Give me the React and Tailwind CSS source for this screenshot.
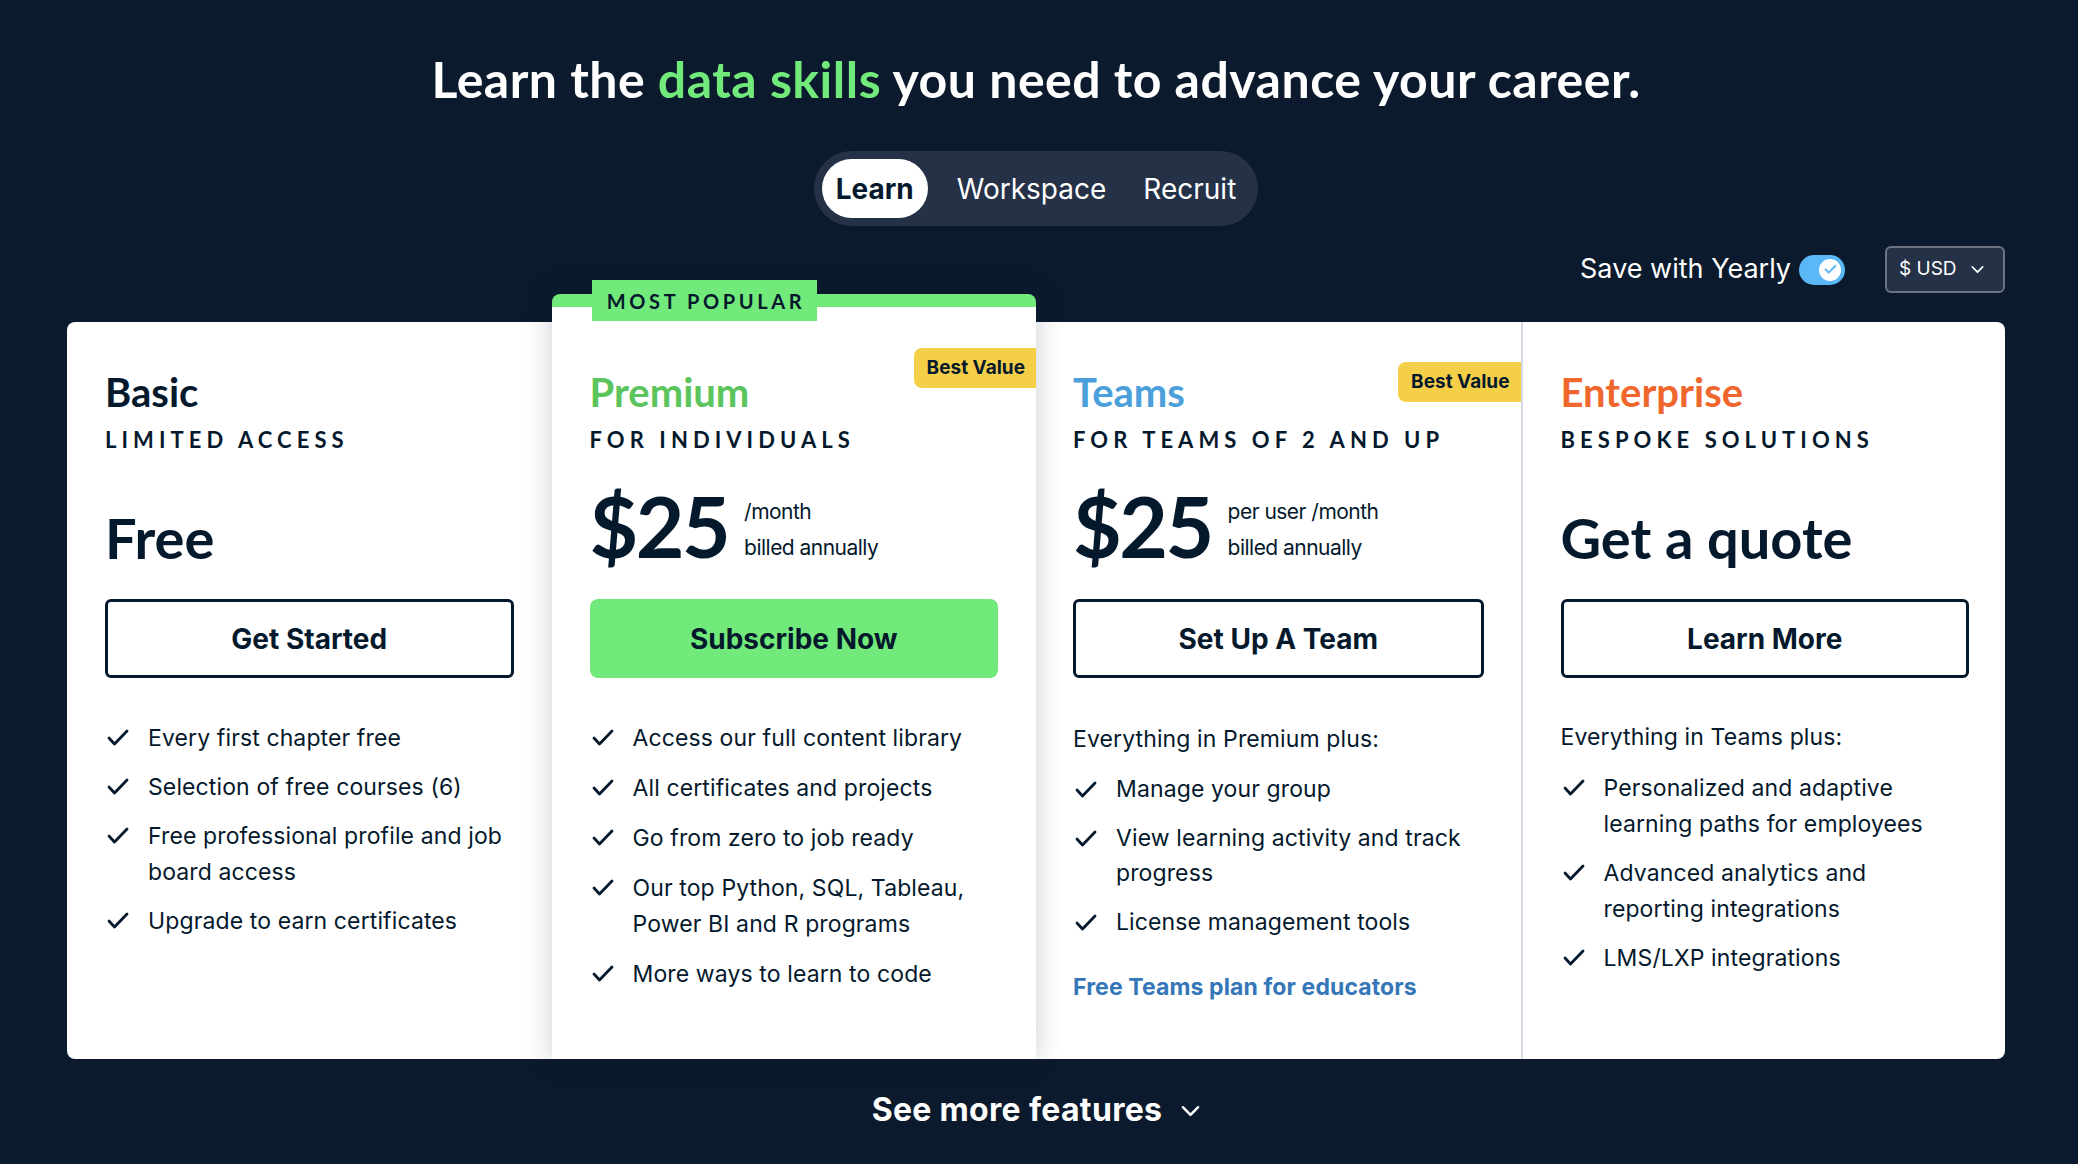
import React from 'react';
import { Check } from 'lucide-react';

// Lato for the big headings, Inter for body / buttons (closer widths to the original face)
const INTER = "font-[Inter,'Liberation_Sans',sans-serif]";

function CheckMark() {
  return (
    <svg viewBox="0 0 22 17" className="w-[22px] h-[17px] mt-[9px] ml-[2px] shrink-0 text-[#05192d]" fill="none" stroke="currentColor" strokeWidth="2.8" strokeLinecap="round" strokeLinejoin="round">
      <path d="M2 9 7.5 15 20 2" />
    </svg>
  );
}

function Chevron({ className }) {
  return (
    <svg viewBox="0 0 20 12" className={className} fill="none" stroke="currentColor" strokeWidth="2.6" strokeLinecap="round" strokeLinejoin="round">
      <path d="M2 2 10 10 18 2" />
    </svg>
  );
}

function Feature({ children }) {
  return (
    <li className="flex gap-[19px]">
      <CheckMark />
      <span className="whitespace-nowrap">{children}</span>
    </li>
  );
}

function BestValue({ top }) {
  return (
    <div className={`absolute right-0 ${top} h-[40px] pl-[13px] pr-[11px] flex items-center bg-[#f5cf48] rounded-l-lg text-[19px] font-bold text-[#05192d] ${INTER}`}>
      Best Value
    </div>
  );
}

function Heading({ title, color, sub }) {
  return (
    <>
      <h2 className={`text-[40px] leading-[48px] font-bold ${color}`}>{title}</h2>
      <p className="mt-[10px] text-[22px] leading-[28px] font-bold tracking-[0.23em] text-[#05192d]">{sub}</p>
    </>
  );
}

function Price({ extra }) {
  return (
    <div className="mt-[30px] h-[84px] flex items-start gap-[16px] text-[#05192d]">
      <span className="text-[84px] leading-[84px] font-bold tracking-[-0.03em]">$25</span>
      <div className={`pt-[10px] text-[21px] leading-[36px] tracking-[-0.025em] ${INTER}`}>
        <div>{extra}</div>
        <div>billed annually</div>
      </div>
    </div>
  );
}

function BigText({ children }) {
  return (
    <div className="mt-[30px] h-[84px]">
      <div className="pt-[26px] text-[56px] leading-[56px] font-bold text-[#05192d]">{children}</div>
    </div>
  );
}

function OutlineButton({ children }) {
  return (
    <button className={`mt-[31px] w-full h-[79px] border-[3px] border-[#05192d] rounded-md bg-white text-[28px] font-bold text-[#05192d] ${INTER}`}>
      {children}
    </button>
  );
}

export default function App() {
  return (
    <div className="min-h-screen w-full bg-[#0b1a2c] font-[Lato,'Liberation_Sans',sans-serif]">
      <div className="w-[2072px] flex flex-col items-center pb-[30px]">
        <h1 className="pt-[51px] text-[50px] leading-[56px] font-bold tracking-[0.01em] text-white">
          Learn the <span className="text-[#72ea7b]">data skills</span> you need to advance your career.
        </h1>

        {/* tabs */}
        <div className={`mt-[44px] flex items-center p-[8px] rounded-full bg-[#253147] ${INTER}`}>
          <div className="h-[59px] px-[14px] flex items-center rounded-full bg-white text-[28px] font-bold text-[#05192d]">Learn</div>
          <div className="h-[59px] px-[14px] ml-[15px] flex items-center text-[28px] text-white">Workspace</div>
          <div className="h-[59px] px-[14px] ml-[9px] flex items-center text-[28px] text-white">Recruit</div>
        </div>

        <div className="w-[1938px]">
          <div className={`mt-[20px] h-[47px] flex items-center justify-end ${INTER}`}>
            <span className="text-[27px] text-white">Save with Yearly</span>
            <div className="ml-[8px] w-[46px] h-[30px] rounded-full bg-[#5bb8f6] flex items-center justify-end pr-[4px]">
              <div className="w-[22px] h-[22px] rounded-full bg-white flex items-center justify-center">
                <Check size={15} strokeWidth={3.2} className="text-[#5bb8f6]" />
              </div>
            </div>
            <button className="ml-[40px] w-[120px] h-[47px] pl-[12px] flex items-center rounded-md border-2 border-[#6b7380] bg-[#253147] text-[19px] text-white">
              <span>$ USD</span>
              <Chevron className="ml-[14px] w-[13px] h-[9px]" />
            </button>
          </div>

          {/* cards */}
          <div className="mt-[29px] h-[737px] grid grid-cols-4">
            {/* Basic */}
            <div className="bg-white rounded-l-lg px-[38px] pt-[46px]">
              <Heading title="Basic" color="text-[#05192d]" sub="LIMITED ACCESS" />
              <BigText>Free</BigText>
              <OutlineButton>Get Started</OutlineButton>
              <ul className={`mt-[42px] flex flex-col gap-[13px] text-[23px] leading-[36px] tracking-[0.005em] text-[#05192d] ${INTER}`}>
                <Feature>Every first chapter free</Feature>
                <Feature>Selection of free courses (6)</Feature>
                <Feature>Free professional profile and job<br />board access</Feature>
                <Feature>Upgrade to earn certificates</Feature>
              </ul>
            </div>

            {/* Premium */}
            <div className="relative z-10 -mt-[28px] bg-white border-t-[13px] border-[#72ea7b] rounded-t-lg px-[38px] pt-[61px] shadow-[0_0_28px_rgba(5,25,45,0.22)]">
              <div className="absolute left-[40px] -top-[27px] w-[225px] h-[41px] pl-[4px] flex items-center justify-center bg-[#72ea7b] text-[20px] font-bold tracking-[0.18em] text-[#05192d]">
                MOST POPULAR
              </div>
              <BestValue top="top-[41px]" />
              <Heading title="Premium" color="text-[#5cc45d]" sub="FOR INDIVIDUALS" />
              <Price extra="/month" />
              <button className={`mt-[31px] w-full h-[79px] rounded-lg bg-[#72ea7b] text-[28px] font-bold text-[#05192d] ${INTER}`}>
                Subscribe Now
              </button>
              <ul className={`mt-[42px] flex flex-col gap-[14px] text-[23px] leading-[36px] tracking-[0.005em] text-[#05192d] ${INTER}`}>
                <Feature>Access our full content library</Feature>
                <Feature>All certificates and projects</Feature>
                <Feature>Go from zero to job ready</Feature>
                <Feature>Our top Python, SQL, Tableau,<br />Power BI and R programs</Feature>
                <Feature>More ways to learn to code</Feature>
              </ul>
            </div>

            {/* Teams */}
            <div className="relative bg-white px-[37px] pt-[46px]">
              <BestValue top="top-[40px]" />
              <Heading title="Teams" color="text-[#4b9fda]" sub="FOR TEAMS OF 2 AND UP" />
              <Price extra="per user /month" />
              <OutlineButton>Set Up A Team</OutlineButton>
              <div className={`${INTER} text-[23px] tracking-[0.005em] text-[#05192d]`}>
                <p className="mt-[43px] leading-[36px]">Everything in Premium plus:</p>
                <ul className="mt-[15px] flex flex-col gap-[14px] leading-[35px]">
                  <Feature>Manage your group</Feature>
                  <Feature>View learning activity and track<br />progress</Feature>
                  <Feature>License management tools</Feature>
                </ul>
                <p className="mt-[29px] leading-[36px] font-bold text-[#3576b8]">Free Teams plan for educators</p>
              </div>
            </div>

            {/* Enterprise */}
            <div className="bg-white rounded-r-lg border-l-2 border-[#d9d9e3] pl-[38px] pr-[36px] pt-[46px]">
              <Heading title="Enterprise" color="text-[#f0672e]" sub="BESPOKE SOLUTIONS" />
              <BigText>Get a quote</BigText>
              <OutlineButton>Learn More</OutlineButton>
              <div className={`${INTER} text-[23px] tracking-[0.005em] text-[#05192d]`}>
                <p className="mt-[41px] leading-[36px]">Everything in Teams plus:</p>
                <ul className="mt-[15px] flex flex-col gap-[13px] leading-[36px]">
                  <Feature>Personalized and adaptive<br />learning paths for employees</Feature>
                  <Feature>Advanced analytics and<br />reporting integrations</Feature>
                  <Feature>LMS/LXP integrations</Feature>
                </ul>
              </div>
            </div>
          </div>
        </div>

        <button className={`mt-[33px] flex items-center gap-[19px] text-[32px] leading-[36px] font-bold tracking-[0.01em] text-white ${INTER}`}>
          See more features
          <Chevron className="w-[19px] h-[12px] mt-[2px]" />
        </button>
      </div>
    </div>
  );
}
